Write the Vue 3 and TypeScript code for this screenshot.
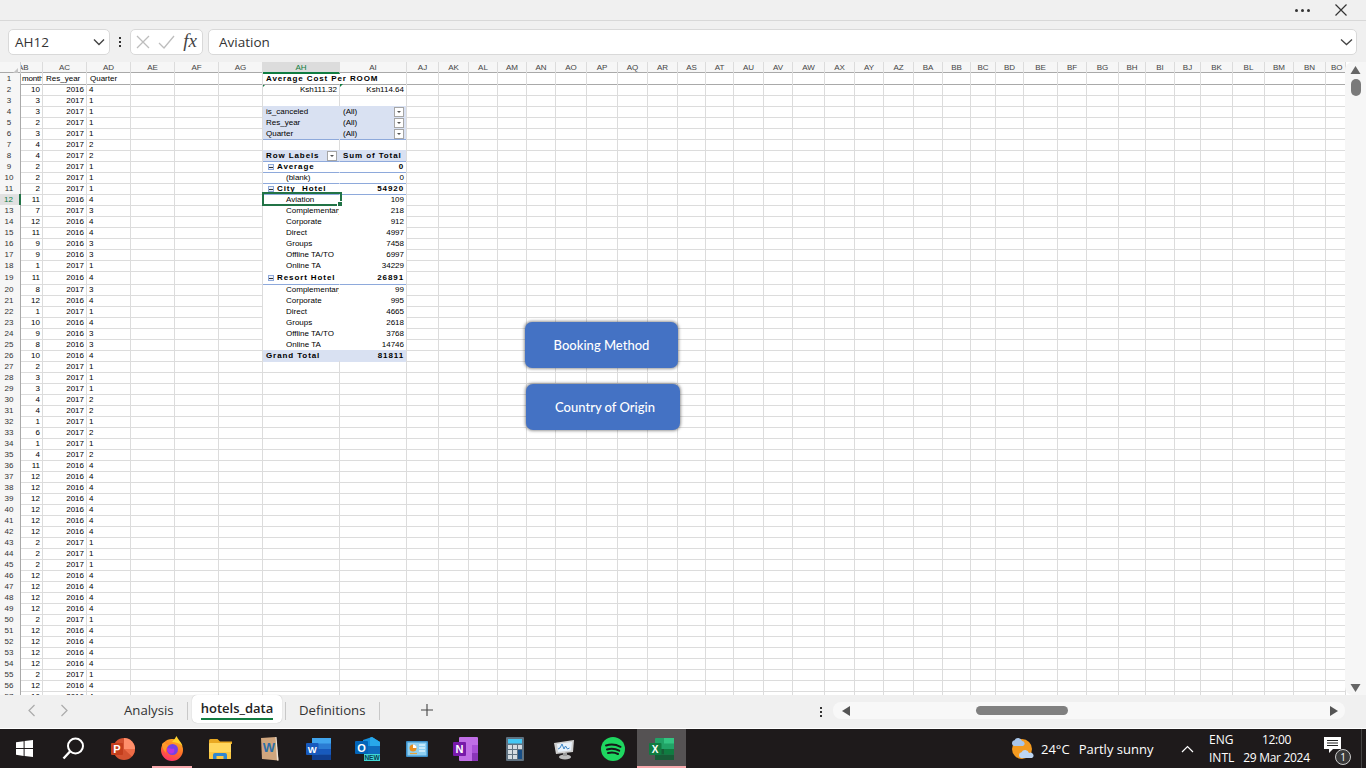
<script setup lang="ts">
import { computed } from 'vue';

interface Cell {
    text?: string;
    cls?: string;
    minus?: boolean;
    drop?: boolean;
}

// right hand edge of every column, read off the header row
const colEdges: [string, number][] = [
    ['AB', 42], ['AC', 86], ['AD', 130], ['AE', 174], ['AF', 218], ['AG', 262], ['AH', 339], ['AI', 406],
    ['AJ', 438], ['AK', 468], ['AL', 497], ['AM', 526], ['AN', 555], ['AO', 586], ['AP', 617], ['AQ', 647],
    ['AR', 677], ['AS', 705], ['AT', 733], ['AU', 763], ['AV', 792], ['AW', 824], ['AX', 854], ['AY', 883],
    ['AZ', 913], ['BA', 942], ['BB', 970], ['BC', 995], ['BD', 1023], ['BE', 1057], ['BF', 1086], ['BG', 1118],
    ['BH', 1145], ['BI', 1174], ['BJ', 1200], ['BK', 1232], ['BL', 1264], ['BM', 1293], ['BN', 1325], ['BO', 1345],
];
const colNames = colEdges.map((c) => c[0]);
const gridColumns = computed(() => {
    let prev = 20;
    const widths = colEdges.map(([, edge]) => {
        const w = edge - prev;
        prev = edge;
        return `${w}px`;
    });
    return `21px ${widths.join(' ')}`;
});

// month, year, quarter from row 2 down
const dec = [12, 2016, 4];
const feb = [2, 2017, 1];
const hotelRows: number[][] = [
    [10, 2016, 4], [3, 2017, 1], [3, 2017, 1], feb, [3, 2017, 1], [4, 2017, 2], [4, 2017, 2], feb, feb, feb,
    [11, 2016, 4], [7, 2017, 3], dec, [11, 2016, 4], [9, 2016, 3], [9, 2016, 3], [1, 2017, 1], [11, 2016, 4],
    [8, 2017, 3], dec, [1, 2017, 1], [10, 2016, 4], [9, 2016, 3], [8, 2016, 3], [10, 2016, 4], feb, [3, 2017, 1],
    [3, 2017, 1], [4, 2017, 2], [4, 2017, 2], [1, 2017, 1], [6, 2017, 2], [1, 2017, 1], [4, 2017, 2], [11, 2016, 4],
    dec, dec, dec, dec, dec, dec, feb, feb, feb, dec, dec, dec, dec, feb, dec, dec, dec, dec, feb, dec, [10, 2016, 4],
];

const cells: Record<string, Cell> = {
    AB1: { text: 'month', cls: 'tight' },
    AC1: { text: 'Res_year', cls: 'shift' },
    AD1: { text: 'Quarter', cls: 'shift' },
    AH1: { text: 'Average Cost Per ROOM', cls: 'wide over no-right shift' },
    AH2: { text: 'Ksh111.32', cls: 'num tick' },
    AI2: { text: 'Ksh114.64', cls: 'num tick' },
};

const filter = (row: number, label: string, last = false) => {
    const line = last ? ' line' : '';
    cells[`AH${row}`] = { text: label, cls: `fill no-right shift${line}` };
    cells[`AI${row}`] = { text: '(All)', cls: `fill shift${line}`, drop: true };
};
filter(4, 'is_canceled');
filter(5, 'Res_year');
filter(6, 'Quarter', true);

cells.AH8 = { text: 'Row Labels', cls: 'fill wide line no-right shift', drop: true };
cells.AI8 = { text: 'Sum of Total', cls: 'fill wide line shift' };

const pivot: [string, string, 'group' | 'item'][] = [
    ['Average', '0', 'group'], ['(blank)', '0', 'item'],
    ['City  Hotel', '54920', 'group'], ['Aviation', '109', 'item'], ['Complementary', '218', 'item'],
    ['Corporate', '912', 'item'], ['Direct', '4997', 'item'], ['Groups', '7458', 'item'],
    ['Offline TA/TO', '6997', 'item'], ['Online TA', '34229', 'item'],
    ['Resort Hotel', '26891', 'group'], ['Complementary', '99', 'item'], ['Corporate', '995', 'item'],
    ['Direct', '4665', 'item'], ['Groups', '2618', 'item'], ['Offline TA/TO', '3768', 'item'],
    ['Online TA', '14746', 'item'],
];
pivot.forEach(([label, value, kind], i) => {
    const row = 9 + i;
    const line = kind === 'group' || row === 10 || row === 25 ? ' line' : '';
    if (kind === 'group') {
        cells[`AH${row}`] = { text: label, cls: `plain wide no-right group${line}`, minus: true };
        cells[`AI${row}`] = { text: value, cls: `plain wide num${line}` };
    } else {
        cells[`AH${row}`] = { text: label, cls: `plain item no-right${line}` };
        cells[`AI${row}`] = { text: value, cls: `plain num${line}` };
    }
});
cells.AH26 = { text: 'Grand Total', cls: 'fill wide no-right shift' };
cells.AI26 = { text: '81811', cls: 'fill wide num' };

hotelRows.forEach(([month, year, quarter], i) => {
    const row = i + 2;
    cells[`AB${row}`] = { text: String(month), cls: 'num' };
    cells[`AC${row}`] = { text: String(year), cls: 'num' };
    cells[`AD${row}`] = { text: String(quarter) };
});

const rowNumbers = Array.from({ length: 57 }, (_, i) => i + 1);
const cellAt = (col: string, row: number): Cell => cells[`${col}${row}`] ?? {};

const tabs = ['Analysis', 'hotels_data', 'Definitions'];
</script>

<template>
    <div class="window">
        <div class="titlebar">
            <span class="more"><i></i><i></i><i></i></span>
            <svg class="close" width="14" height="14" viewBox="0 0 14 14"><path d="M1.5 1.5l11 11M12.500 1.500l-11 11" stroke="#333" stroke-width="1.2" fill="none" /></svg>
        </div>

        <div class="formula">
            <div class="box namebox">
                <span>AH12</span>
                <svg width="12" height="8" viewBox="0 0 12 8"><path d="M1 1.5l5 5 5-5" stroke="#444" stroke-width="1.4" fill="none" /></svg>
            </div>
            <span class="vdots"><i></i><i></i><i></i></span>
            <div class="box actions">
                <svg width="14" height="14" viewBox="0 0 14 14"><path d="M1 1l12 12M13 1L1 13" stroke="#bdbdbd" stroke-width="1.3" fill="none" /></svg>
                <svg width="17" height="14" viewBox="0 0 17 14"><path d="M1 8l5 5L16 1" stroke="#bdbdbd" stroke-width="1.3" fill="none" /></svg>
                <span class="fx">fx</span>
            </div>
            <div class="box fbox">
                <span>Aviation</span>
                <svg width="13" height="8" viewBox="0 0 13 8"><path d="M1 1.5l5.500 5 5.500-5" stroke="#444" stroke-width="1.3" fill="none" /></svg>
            </div>
        </div>

        <div class="sheet">
            <div class="grid">
                <div class="row head-row" :style="{ gridTemplateColumns: gridColumns }">
                    <div class="corner"><b></b></div>
                    <div v-for="col in colNames" :key="col" class="col-head"
                        :class="{ current: col === 'AH', cut: col === 'AB', 'cut-end': col === 'BO' }">{{ col }}</div>
                </div>
                <div v-for="row in rowNumbers" :key="row" class="row" :class="{ frozen: row === 1, tall: row === 19 }"
                    :style="{ gridTemplateColumns: gridColumns }">
                    <div class="row-head" :class="{ current: row === 12 }">{{ row }}</div>
                    <div v-for="col in colNames" :key="col" class="cell" :class="cellAt(col, row).cls">
                        <span v-if="cellAt(col, row).minus" class="minus"></span>
                        <span class="txt">{{ cellAt(col, row).text }}</span>
                        <span v-if="cellAt(col, row).drop" class="drop"></span>
                        <div v-if="col === 'AH' && row === 12" class="selection"><b></b></div>
                    </div>
                </div>
            </div>
            <div class="vscroll">
                <svg width="11" height="8" viewBox="0 0 11 8"><path d="M5.500 0l5 8H.5z" fill="#666" /></svg>
                <div class="vthumb"></div>
                <svg class="vdown" width="11" height="8" viewBox="0 0 11 8"><path d="M5.500 8l5-8H.5z" fill="#666" /></svg>
            </div>

            <button class="shape shape-booking">Booking Method</button>
            <button class="shape shape-country">Country of Origin</button>
        </div>

        <div class="tabbar">
            <div class="tab-nav">
                <svg width="9" height="13" viewBox="0 0 9 13"><path d="M7.500 1L2 6.500 7.500 12" stroke="#aaa" stroke-width="1.2" fill="none" /></svg>
                <svg width="9" height="13" viewBox="0 0 9 13"><path d="M1.500 1L7 6.500 1.500 12" stroke="#aaa" stroke-width="1.2" fill="none" /></svg>
            </div>
            <div class="tabs">
                <div v-for="tab in tabs" :key="tab" class="tab" :class="{ active: tab === 'hotels_data' }">
                    <span>{{ tab }}</span>
                </div>
            </div>
            <svg class="add" width="12" height="12" viewBox="0 0 12 12"><path d="M6 0v12M0 6h12" stroke="#444" stroke-width="1.1" /></svg>
            <span class="vdots tab-dots"><i></i><i></i><i></i></span>
            <div class="hscroll">
                <svg width="8" height="10" viewBox="0 0 8 10"><path d="M0 5l8-5v10z" fill="#555" /></svg>
                <div class="hthumb"></div>
                <svg width="8" height="10" viewBox="0 0 8 10"><path d="M8 5L0 0v10z" fill="#555" /></svg>
            </div>
        </div>

        <div class="taskbar">
            <div class="slot">
                <svg width="17" height="17" viewBox="0 0 17 17"><path d="M0 2.300l7.600-1.100v6.900H0zM8.600 1l8.400-1v8.100H8.600zM0 9h7.600v6.900L0 14.800zM8.600 9H17v8l-8.400-1.100z" fill="#fff" /></svg>
            </div>
            <div class="slot">
                <svg width="23" height="23" viewBox="0 0 23 23"><circle cx="13.500" cy="9" r="7.500" stroke="#fff" stroke-width="2" fill="none" /><path d="M8 14.500L1.500 21.500" stroke="#fff" stroke-width="2.400" /></svg>
            </div>
            <div class="slot">
                <svg width="26" height="24" viewBox="0 0 26 24"><circle cx="14" cy="12" r="11" fill="#d35230" /><path d="M14 1a11 11 0 0 1 11 11H14z" fill="#ff8f6b" /><path d="M14 12h11a11 11 0 0 1-3 7.500z" fill="#ed6c47" /><rect x="1" y="6" width="12" height="12" rx="1" fill="#c43e1c" /><text x="7" y="16" class="ico-letter" font-size="11">P</text></svg>
            </div>
            <div class="slot pinned">
                <svg width="24" height="25" viewBox="0 0 24 25">
                    <defs><linearGradient id="fox" x1="0.700" y1="0" x2="0.300" y2="1"><stop offset="0" stop-color="#ffb01f" /><stop offset="0.550" stop-color="#ff6b2b" /><stop offset="1" stop-color="#ff2f6e" /></linearGradient></defs>
                    <circle cx="12" cy="14" r="11" fill="url(#fox)" />
                    <path d="M12 6c2-2 3.500-4 4.500-6 1 3 5 6 6 10-3-3-7-4-10.500-4z" fill="#ffd22e" />
                    <path d="M2 8c1-1 2-2 3-2 0 2 2 3 5 3-3 1-5 4-4 8-2-2-4-5-4-9z" fill="#ff9a2a" />
                    <circle cx="12.500" cy="13.500" r="5.500" fill="#7542e5" />
                    <path d="M7 12.500c3-1 4 1 7 0 1 2 0 5-2 5-3 0-5-2-5-5z" fill="#b833e1" />
                </svg>
            </div>
            <div class="slot">
                <svg width="23" height="20" viewBox="0 0 23 20"><path d="M0 1.500A1.500 1.500 0 0 1 1.500 0h7l2.500 2.500h12V5H0z" fill="#e9a922" /><rect y="4" width="22" height="16" rx="1" fill="#ffd75e" /><path d="M0 13h22v5.500a1.500 1.500 0 0 1-1.500 1.500h-19A1.500 1.500 0 0 1 0 18.500z" fill="#fbc843" /><path d="M4 20v-4a2 2 0 0 1 2-2h10a2 2 0 0 1 2 2v4h-3.500v-3h-7v3z" fill="#2f86d0" /></svg>
            </div>
            <div class="slot">
                <svg width="19" height="24" viewBox="0 0 19 24"><path d="M1 1l15-1 2.500 23.500L2 22z" fill="#d0a67e" /><path d="M15.500 0l1 0 2 23.500-1.500 0z" fill="#efe7dc" /><text x="9" y="15" class="ico-letter word-w" font-size="13">W</text></svg>
            </div>
            <div class="slot">
                <svg width="25" height="22" viewBox="0 0 25 22"><rect x="6" width="19" height="22" rx="1" fill="#2b7cd3" /><rect x="6" y="0" width="19" height="5.500" fill="#41a5ee" /><rect x="6" y="11" width="19" height="5.500" fill="#185abd" /><rect x="6" y="16.500" width="19" height="5.500" fill="#103f91" /><rect y="5" width="12.500" height="12" rx="1" fill="#185abd" /><text x="6.200" y="14.500" class="ico-letter" font-size="9.500">W</text></svg>
            </div>
            <div class="slot">
                <svg width="25" height="24" viewBox="0 0 25 24"><path d="M8 3l9-3 8 5v11H8z" fill="#1490df" /><path d="M15 .7L17 0l8 5v5h-10z" fill="#28a8ea" /><path d="M8 9h17v8H8z" fill="#0f6cbd" /><rect y="4" width="13" height="13" rx="1" fill="#0364b8" /><text x="6.500" y="14.500" class="ico-letter" font-size="11">O</text><rect x="9" y="17" width="16" height="7" fill="#3fd6d6" /><text x="17" y="23" class="ico-new" font-size="6.500">NEW</text></svg>
            </div>
            <div class="slot">
                <svg width="22" height="16" viewBox="0 0 22 16"><rect width="22" height="16" rx="1" fill="#3b8fc9" /><rect x="1.500" y="1.500" width="19" height="13" fill="#8fd0f2" /><circle cx="7" cy="7" r="3.500" fill="#e88f1f" /><path d="M7 7V3.500A3.500 3.500 0 0 1 10.500 7z" fill="#fff" /><path d="M13 4h6M13 7h6M13 10h6" stroke="#fff" stroke-width="1.200" /><path d="M4 12.500h7" stroke="#e8a43a" stroke-width="1.200" /></svg>
            </div>
            <div class="slot">
                <svg width="25" height="24" viewBox="0 0 25 24"><rect x="6" width="19" height="24" rx="1" fill="#c06ee6" /><rect x="19" y="8" width="6" height="8" fill="#a94fd6" /><rect x="19" y="16" width="6" height="8" fill="#8a35b8" /><rect y="5" width="13" height="14" rx="1" fill="#7719aa" /><text x="6.500" y="16" class="ico-letter" font-size="11">N</text></svg>
            </div>
            <div class="slot">
                <svg width="18" height="24" viewBox="0 0 18 24"><rect width="18" height="24" rx="1" fill="#5f7180" /><rect x="2" y="2" width="14" height="4.500" fill="#44c8f5" /><path d="M2 8h4v4H2zM7 8h4v4H7zM12 8h4v4h-4zM2 13h4v4H2zM7 13h4v4H7zM2 18h4v4H2zM7 18h4v4H7z" fill="#d4dce2" /><rect x="12" y="13" width="4" height="9" fill="#174e86" /></svg>
            </div>
            <div class="slot">
                <svg width="24" height="22" viewBox="0 0 24 22"><path d="M2 5l20-3-1 12-17 2z" fill="#cfcfcf" /><path d="M5 6l15-2-1 8.500L6 14z" fill="#e8f1fa" /><path d="M6 11l2-1 2-4 2 5 1.500-3 2 3 2-1" stroke="#3d86c6" stroke-width="1" fill="none" /><ellipse cx="13" cy="19" rx="6" ry="2.500" fill="#bdbdbd" /><rect x="11" y="15" width="4" height="3" fill="#9b9b9b" /></svg>
            </div>
            <div class="slot">
                <svg width="24" height="24" viewBox="0 0 24 24"><circle cx="12" cy="12" r="12" fill="#1ed760" /><path d="M5 8.500c5-1.500 10-1 14.500 1.300M6 12.500c4-1.200 8.500-.8 12.200 1.200M7 16c3.500-.9 7-.6 10 1" stroke="#15191a" stroke-width="2" stroke-linecap="round" fill="none" /></svg>
            </div>
            <div class="slot active-app pinned">
                <svg width="25" height="22" viewBox="0 0 25 22"><rect x="6" width="19" height="22" rx="1" fill="#21a366" /><rect x="15" width="10" height="5.500" fill="#33c481" /><rect x="15" y="11" width="10" height="5.500" fill="#107c41" /><rect x="6" y="16.500" width="19" height="5.500" fill="#185c37" /><rect x="6" y="11" width="9" height="5.500" fill="#185c37" /><rect y="5" width="12.500" height="12" rx="1" fill="#107c41" /><text x="6.200" y="15" class="ico-letter" font-size="10">X</text></svg>
            </div>

            <div class="tray">
                <div class="weather">
                    <svg width="25" height="24" viewBox="0 0 25 24"><circle cx="13" cy="12" r="10" fill="#f39a1f" /><path d="M5 9a3 3 0 0 1 .500-5.800A4 4 0 0 1 13 4a2.600 2.600 0 0 1 1 5z" fill="#a9c6ea" /><path d="M12 21a3 3 0 0 1 .500-5.800A4 4 0 0 1 20 16a2.600 2.600 0 0 1 3 5z" fill="#bcd5f2" /></svg>
                    <span class="temp">24°C</span>
                    <span>Partly sunny</span>
                </div>
                <svg class="chev" width="13" height="8" viewBox="0 0 13 8"><path d="M1 7l5.500-5.500L12 7" stroke="#fff" stroke-width="1.200" fill="none" /></svg>
                <div class="lang"><span>ENG</span><span>INTL</span></div>
                <div class="clock"><span>12:00</span><span>29 Mar 2024</span></div>
                <div class="notify">
                    <svg width="18" height="16" viewBox="0 0 18 16"><path d="M0 0h17v12H9l-4 4v-4H0z" fill="#fff" /><path d="M3 3.500h11M3 6h11M3 8.500h11" stroke="#222" stroke-width="1" /></svg>
                    <span class="badge">1</span>
                </div>
            </div>
        </div>
    </div>
</template>

<style>
html,
body {
    margin: 0;
    height: 100%;
    overflow: hidden;
}
</style>

<style scoped>
* {
    box-sizing: border-box;
}

.window {
    width: 1366px;
    height: 768px;
    display: flex;
    flex-direction: column;
    background: #f0f0f0;
    font-family: "Open Sans", "Noto Sans", sans-serif;
    overflow: hidden;
}

.titlebar {
    height: 21px;
    flex: none;
    display: flex;
    align-items: center;
    justify-content: flex-end;
    padding-right: 18px;
    border-bottom: 1px solid #d8d8d8;
}

.more {
    display: flex;
    gap: 3px;
    margin-right: 24px;
}

.more i {
    width: 3px;
    height: 3px;
    border-radius: 50%;
    background: #333;
}

.formula {
    height: 41px;
    flex: none;
    display: flex;
    align-items: flex-start;
    padding: 8px 9px 0 8px;
}

.box {
    height: 26px;
    display: flex;
    align-items: center;
    background: #fff;
    border: 1px solid #d9d9d9;
    border-radius: 5px;
    font-size: 13.5px;
    color: #333;
}

.namebox {
    width: 102px;
    padding: 0 4px 0 6px;
    justify-content: space-between;
}

.vdots {
    display: flex;
    flex-direction: column;
    gap: 2px;
}

.vdots i {
    width: 2px;
    height: 2px;
    background: #333;
}

.formula .vdots {
    margin: 8px 9px 0 9px;
}

.actions {
    width: 73px;
    padding: 0 5px;
    justify-content: space-between;
}

.fx {
    font: italic 19px "Liberation Serif", serif;
    color: #444;
    margin-top: -3px;
}

.fbox {
    flex: 1;
    margin-left: 5px;
    padding: 0 3px 0 10px;
    justify-content: space-between;
}

.sheet {
    position: relative;
    height: 633px;
    flex: none;
    display: flex;
    background: #fff;
    overflow: hidden;
}

.grid {
    width: 1345px;
    flex: none;
    font: 8px/10px "Liberation Sans", sans-serif;
    color: #000;
}

.row {
    display: grid;
    height: 11px;
}

.row.tall {
    height: 13px;
}

.head-row {
    background: #f6f6f6;
    border-bottom: 1px solid #a9a9a9;
}

.corner {
    position: relative;
    border-right: 1px solid #cfcfcf;
}

.corner b {
    position: absolute;
    right: 2px;
    bottom: 1px;
    border-style: solid;
    border-width: 0 0 5px 5px;
    border-color: transparent transparent #c4c4c4 transparent;
}

.col-head {
    text-align: center;
    color: #444;
    border-right: 1px solid #dcdcdc;
    line-height: 11px;
    overflow: hidden;
    white-space: nowrap;
}

.col-head.cut {
    text-align: left;
    text-indent: -3px;
}

.col-head.cut-end {
    text-align: left;
    padding-left: 5px;
}

.col-head.current {
    background: #dcdcdc;
    color: #107c41;
    border-bottom: 2px solid #107c41;
    height: 12px;
}

.row-head {
    background: #f6f6f6;
    color: #333;
    text-align: center;
    padding-right: 2px;
    border-right: 1px solid #a9a9a9;
    border-bottom: 1px solid #dcdcdc;
    line-height: 11px;
}

.row-head.current {
    background: #e1e1e1;
    color: #107c41;
    border-right: 2px solid #217346;
}

.tall .row-head {
    line-height: 13px;
}

.frozen .row-head,
.frozen .cell {
    border-bottom: 1px solid #a9a9a9;
}

.cell {
    position: relative;
    display: flex;
    align-items: center;
    padding: 1px 2px 0;
    white-space: nowrap;
    overflow: hidden;
    border-right: 1px solid #dcdcdc;
    border-bottom: 1px solid #dcdcdc;
}

.txt {
    white-space: pre;
}

.num {
    justify-content: flex-end;
}

.shift {
    padding-left: 3px;
}

.tight {
    padding-left: 1px;
    padding-right: 0;
    letter-spacing: -0.2px;
}

.over {
    overflow: visible;
    z-index: 1;
}

.no-right {
    border-right-color: transparent;
}

.wide {
    font-weight: 700;
    letter-spacing: 0.9px;
}

.fill {
    background: #d9e1f2;
    border-bottom-color: #d9e1f2;
}

.fill.no-right {
    border-right-color: #d9e1f2;
}

.plain {
    border-bottom-color: #fff;
}

.line,
.plain.line,
.fill.line {
    border-bottom-color: #8ea9db;
}

.item {
    padding-left: 23px;
}

.group {
    padding-left: 5px;
}

.tick::before {
    content: "";
    position: absolute;
    left: 0;
    top: 0;
    border-style: solid;
    border-width: 3px 3px 0 0;
    border-color: #107c41 transparent transparent transparent;
}

.minus {
    width: 6px;
    height: 6px;
    margin-right: 3px;
    flex: none;
    border: 1px solid #8ea9db;
    background: linear-gradient(#333, #333) center / 4px 1px no-repeat #eef1f8;
}

.drop {
    margin-left: auto;
    width: 10px;
    height: 10px;
    flex: none;
    margin-right: 0;
    background: #fff;
    border: 1px solid #a6a6a6;
    position: relative;
}

.drop::after {
    content: "";
    position: absolute;
    left: 2px;
    top: 3px;
    border-style: solid;
    border-width: 2px 2px 0 2px;
    border-color: #555 transparent transparent transparent;
}

.cell:has(.selection) {
    overflow: visible;
    z-index: 2;
}

.selection {
    position: absolute;
    left: -1px;
    top: -2px;
    width: 80px;
    height: 14px;
    border: 2px solid #217346;
}

.selection b {
    position: absolute;
    right: -3px;
    bottom: -3px;
    width: 6px;
    height: 6px;
    background: #217346;
    border: 1px solid #fff;
}

.vscroll {
    flex: 1;
    position: relative;
    display: flex;
    flex-direction: column;
    align-items: center;
    background: #f6f6f6;
    padding: 4px 0 0 0;
    height: 633px;
    border-radius: 8px 0 0 8px;
}

.vthumb {
    width: 10px;
    height: 17px;
    margin-top: 5px;
    border-radius: 5px;
    background: #7a7a7a;
}

.vdown {
    margin-top: auto;
    margin-bottom: 3px;
}

.shape {
    position: absolute;
    height: 46px;
    border: none;
    border-radius: 7px;
    background: #4472c4;
    color: #fff;
    font: 500 13px Lato, "Open Sans", sans-serif;
    box-shadow: 0 0 3px 1px rgba(70, 70, 70, 0.55);
    z-index: 3;
}

.shape-booking {
    left: 525px;
    top: 260px;
    width: 153px;
}

.shape-country {
    left: 526px;
    top: 322px;
    width: 154px;
    padding-left: 10px;
}

.tabbar {
    height: 33px;
    flex: none;
    display: flex;
    align-items: flex-start;
    background: #f0f0f0;
}

.tab-nav {
    width: 116px;
    flex: none;
    display: flex;
    gap: 24px;
    padding: 9px 0 0 27px;
}

.tabs {
    display: flex;
    font-size: 13.2px;
    color: #333;
    width: 264px;
    flex: none;
}

.tab {
    height: 28px;
    display: flex;
    align-items: flex-start;
    line-height: 31px;
    position: relative;
}

.tab:nth-child(1) {
    width: 72px;
    margin-right: 4px;
    padding-left: 8px;
}

.tab:nth-child(2) {
    width: 90px;
    margin-right: 3px;
    justify-content: center;
}

.tab:nth-child(3) {
    width: 95px;
    padding-left: 14px;
}

.tab:nth-child(1)::after,
.tab:nth-child(3)::after {
    content: "";
    position: absolute;
    right: 0;
    top: 7px;
    height: 18px;
    width: 1px;
    background: #c8c8c8;
}

.tab:nth-child(3)::before {
    content: "";
    position: absolute;
    left: 0;
    top: 7px;
    height: 18px;
    width: 1px;
    background: #c8c8c8;
}

.tab.active {
    background: #fff;
    font-size: 13px;
    font-weight: 600;
    color: #222;
    border-radius: 5px;
    line-height: 26px;
    box-shadow: 0 0 1px rgba(0, 0, 0, 0.3);
}

.tab.active span {
    height: 25px;
    border-bottom: 2px solid #107c41;
}

.add {
    margin: 9px 0 0 41px;
    flex: none;
}

.tab-dots {
    margin: 12px 0 0 387px;
    flex: none;
}

.hscroll {
    width: 512px;
    height: 17px;
    margin: 7px 0 0 11px;
    padding: 0 7px 0 9px;
    flex: none;
    display: flex;
    align-items: center;
    justify-content: space-between;
    background: #f8f8f8;
    border-radius: 8px;
    position: relative;
}

.hthumb {
    position: absolute;
    left: 143px;
    top: 4px;
    width: 92px;
    height: 9px;
    border-radius: 5px;
    background: #808080;
}

.taskbar {
    height: 40px;
    flex: none;
    display: flex;
    background: #1e1a1b;
    color: #fff;
    border-top: 1px solid #fff;
}

.slot {
    width: 49px;
    flex: none;
    display: flex;
    align-items: center;
    justify-content: center;
    position: relative;
}

.pinned::after {
    content: "";
    position: absolute;
    left: 5px;
    right: 4px;
    bottom: 0;
    height: 2px;
    background: #f7a8ac;
}

.active-app {
    background: #555253;
}

.active-app::after {
    left: 0;
    right: 0;
}

.ico-letter {
    fill: #fff;
    font-family: "Liberation Sans", sans-serif;
    font-weight: 700;
    text-anchor: middle;
}

.word-w {
    fill: #2b6ea8;
}

.ico-new {
    fill: #063b52;
    font-family: "Liberation Sans", sans-serif;
    font-weight: 700;
    text-anchor: middle;
}

.tray {
    margin-left: auto;
    margin-right: 4px;
    display: flex;
    align-items: center;
    font-size: 13px;
    padding-right: 12px;
    border-right: 1px solid #444;
    white-space: nowrap;
}

.weather {
    display: flex;
    align-items: center;
    width: 172px;
}

.temp {
    margin: 0 9px 0 7px;
}

.chev {
    margin: 0 15px 0 0;
}

.lang,
.clock {
    display: flex;
    flex-direction: column;
    font-size: 12px;
    line-height: 18px;
}

.lang {
    width: 35px;
}

.clock {
    width: 65px;
    align-items: center;
    margin-right: 15px;
    letter-spacing: -0.3px;
}

.notify {
    position: relative;
    width: 25px;
    height: 24px;
}

.badge {
    position: absolute;
    right: -2px;
    bottom: -4px;
    width: 16px;
    height: 16px;
    border-radius: 50%;
    border: 1px solid #ccc;
    background: #3a3a3a;
    font-size: 10px;
    line-height: 14px;
    text-align: center;
}
</style>
